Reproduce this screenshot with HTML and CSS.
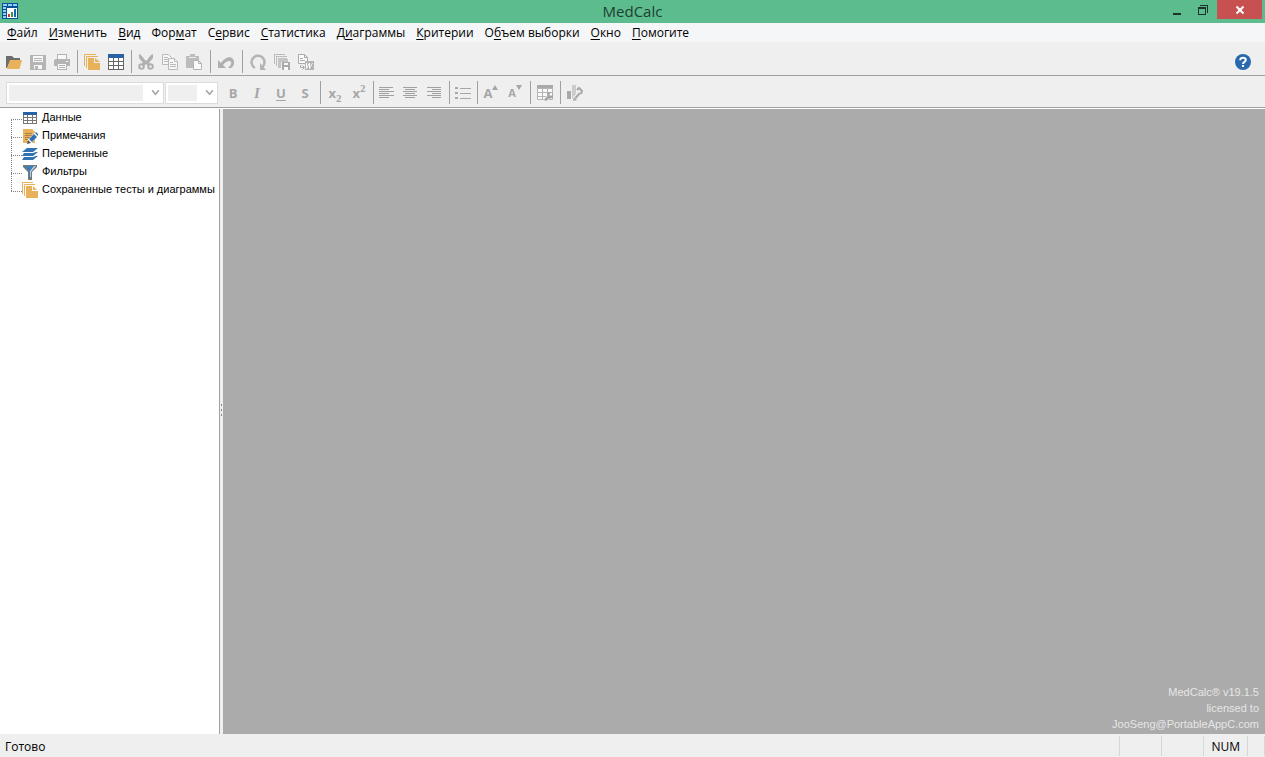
FILE: index.html
```html
<!DOCTYPE html>
<html lang="ru">
<head>
    <meta charset="UTF-8">
    <meta name="viewport" content="width=device-width, initial-scale=1.0">
    <title>MedCalc</title>
    <link rel="stylesheet" href="styles.css">
</head>
<body>
    <!-- Title bar -->
    <header class="titlebar">
        <svg class="app-icon" viewBox="0 0 16 16" shape-rendering="crispEdges">
            <path fill="#0b4f94" d="M0 0h16v16H0z"/>
            <path fill="#8fd0f5" d="M1 1h4v2H1zM6 1h4v2H6zM11 1h4v2h-4zM1 4h3v2H1zM1 7h3v2H1zM1 10h3v2H1zM1 13h3v2H1z"/>
            <path fill="#fff" d="M5 5h10v10H5z"/>
            <path fill="#d33" d="M6 11h2v3H6z"/>
            <path fill="#2a9d4a" d="M9 9h2v5H9z"/>
            <path fill="#1763b0" d="M12 6h2v8h-2z"/>
        </svg>
        <h1 class="title">MedCalc</h1>
        <div class="window-buttons">
            <button class="win-btn" aria-label="Свернуть">
                <svg viewBox="0 0 12 12" shape-rendering="crispEdges"><path fill="#1d3329" d="M1 9h8v2H1z"/></svg>
            </button>
            <button class="win-btn" aria-label="Восстановить">
                <svg viewBox="0 0 12 12" shape-rendering="crispEdges"><path fill="#1d3329" d="M0 3h8v8H0zM1 5v5h6V5zM2 1h8v8H9V2H2z" fill-rule="evenodd"/></svg>
            </button>
            <button class="win-btn win-close" aria-label="Закрыть">
                <svg viewBox="0 0 12 12"><path stroke="#fff" stroke-width="2" d="M2.500 2.500l7 7M9.500 2.500l-7 7"/></svg>
            </button>
        </div>
    </header>

    <!-- Menu -->
    <nav class="menu">
        <a href="#"><u>Ф</u>айл</a>
        <a href="#"><u>И</u>зменить</a>
        <a href="#"><u>В</u>ид</a>
        <a href="#">Фор<u>м</u>ат</a>
        <a href="#">С<u>е</u>рвис</a>
        <a href="#"><u>С</u>татистика</a>
        <a href="#">Д<u>и</u>аграммы</a>
        <a href="#"><u>К</u>ритерии</a>
        <a href="#">О<u>б</u>ъем выборки</a>
        <a href="#"><u>О</u>кно</a>
        <a href="#"><u>П</u>омогите</a>
    </nav>

    <!-- Main toolbar -->
    <div class="toolbar">
        <button class="tool" aria-label="Открыть">
            <svg viewBox="0 0 16 16"><path fill="#6d6d6d" d="M0 2h6l2 2h6v3H4l-3 7H0z"/><path fill="#e8b15c" d="M4 6h12l-2.500 9H1z"/></svg>
        </button>
        <button class="tool" aria-label="Сохранить" disabled>
            <svg viewBox="0 0 16 16" shape-rendering="crispEdges"><path fill="#b4b4b4" fill-rule="evenodd" d="M0 1h15l1 1v14H0zM3 2v6h10V2zM4 11v4h8v-4z"/><path fill="#f8f8f8" d="M3 2h10v6H3zM4 11h8v4H4z"/><path fill="#b4b4b4" d="M4 4h8v1H4zM4 6h8v1H4zM5 12h3v3H5z"/></svg>
        </button>
        <button class="tool" aria-label="Печать" disabled>
            <svg viewBox="0 0 16 16" shape-rendering="crispEdges"><path fill="#b4b4b4" d="M3 0h10v5H3zM1 5h14l1 1v6H0V6zM3 10h10v6H3z"/><path fill="#f8f8f8" d="M4 1h8v4H4zM4 10h8v5H4zM12 7h2v1h-2z"/><path fill="#b4b4b4" d="M5 11h6v1H5zM5 13h6v1H5z"/></svg>
        </button>
        <span class="sep"></span>
        <button class="tool" aria-label="Содержание">
            <svg viewBox="0 0 16 16"><path fill="none" stroke="#e8b15c" d="M.5 12V.5H12M2.500 14V2.500H14"/><path fill="#e8b15c" d="M4 4h6v5h6v7H4zM11 4l5 4h-5z"/></svg>
        </button>
        <button class="tool" aria-label="Данные">
            <svg viewBox="0 0 16 16" shape-rendering="crispEdges"><path fill="#666" d="M0 0h16v16H0z"/><path fill="#2763a6" d="M0 0h16v4H0z"/><path fill="#fff" d="M1 4h4v3H1zM6 4h4v3H6zM11 4h4v3h-4zM1 8h4v3H1zM6 8h4v3H6zM11 8h4v3h-4zM1 12h4v3H1zM6 12h4v3H6zM11 12h4v3h-4z"/></svg>
        </button>
        <span class="sep"></span>
        <button class="tool" aria-label="Вырезать" disabled>
            <svg viewBox="0 0 16 16"><path fill="#b0b0b0" d="M1 0l2 1 4 5 1 1 1-1 4-5 2-1v4l-4 5 2 2-3 1-2-2-2 2-3-1 2-2-4-5z"/><g fill="none" stroke="#b0b0b0" stroke-width="2"><circle cx="3.500" cy="12.500" r="2.300"/><circle cx="12.500" cy="12.500" r="2.300"/></g></svg>
        </button>
        <button class="tool" aria-label="Копировать" disabled>
            <svg viewBox="0 0 16 16"><g fill="#f6f6f6" stroke="#b9b9b9"><path d="M.5.5h6l3 3v7h-9z"/><path d="M6.500 4.500h6l3 3v8h-9z"/><path d="M12.500 4.500v3h3M2 3.500h4M2 5.500h4M2 7.500h4M8 8.500h3M8 10.500h6M8 12.500h6"/></g></svg>
        </button>
        <button class="tool" aria-label="Вставить" disabled>
            <svg viewBox="0 0 16 16"><path fill="#bcbcbc" d="M0 2h4V0h5v2h4v4H7v8H0z"/><path fill="#eee" d="M3 3h7v1H3z"/><path fill="#fafafa" stroke="#b4b4b4" d="M7.500 6.500h5l3 3v6h-8zM12.500 6.500v3h3"/></svg>
        </button>
        <span class="sep sep-wide"></span>
        <button class="tool" aria-label="Отменить" disabled>
            <svg viewBox="0 0 16 16"><path fill="#b0b0b0" d="M0 6v8h8l-3-3c3-4 7-5 8-3 1 2-1 4-3 6h3c3-2 4-6 2-9C12 1 6 4 3 9z"/></svg>
        </button>
        <span class="sep sep-wide"></span>
        <button class="tool" aria-label="Обновить" disabled>
            <svg viewBox="0 0 16 16"><path fill="none" stroke="#b4b4b4" stroke-width="2.500" d="M5 14A6.500 6.500 0 1 1 12.500 13"/><path fill="#b4b4b4" d="M10 9v7h6z"/></svg>
        </button>
        <button class="tool" aria-label="Сохранить все" disabled>
            <svg viewBox="0 0 16 16" shape-rendering="crispEdges"><path fill="none" stroke="#bbb" d="M.5 10V.5H11M2.500 12V2.500H13"/><path fill="#c4c4c4" d="M4 4h9l1 2v2H7v6H4z"/><path fill="#a9a9a9" d="M8 8h8v8H8z"/><path fill="#fafafa" d="M10 9h4v2h-4zM10 13h4v3h-4z"/></svg>
        </button>
        <button class="tool" aria-label="Экспорт в Word" disabled>
            <svg viewBox="0 0 16 16"><path fill="#fafafa" stroke="#aaa" d="M.5.5h6l3 3v6h-9zM6.500.5v3h3M2 4.500h3M2 6.500h5"/><path fill="none" stroke="#aaa" d="M2.500 11v2.500H6M4.500 11.500l2 2-2 2"/><path fill="#b4b4b4" d="M7 7h9v9H7z"/><path fill="none" stroke="#fafafa" d="M8.500 9v5.500l3-5.500v5.500l3-5.500"/></svg>
        </button>
        <button class="tool help" aria-label="Справка">
            <svg viewBox="0 0 16 16"><circle cx="8" cy="8" r="8" fill="#2a69ad"/><path fill="none" stroke="#fff" stroke-width="2" d="M5.200 6.200C5.200 3 11 3 10.800 6 10.700 8 8 7.800 8 10"/><path fill="#fff" d="M7 11h2v2H7z"/></svg>
        </button>
    </div>

    <!-- Format toolbar -->
    <div class="toolbar formatbar">
        <div class="combo combo-font">
            <select aria-label="Шрифт" disabled></select>
            <svg viewBox="0 0 8 8"><path d="M1 2l3 3.500L7 2"/></svg>
        </div>
        <div class="combo combo-size">
            <select aria-label="Размер шрифта" disabled></select>
            <svg viewBox="0 0 8 8"><path d="M1 2l3 3.500L7 2"/></svg>
        </div>
        <button class="tool letter" disabled>B</button>
        <button class="tool letter italic" disabled>I</button>
        <button class="tool letter underline" disabled>U</button>
        <button class="tool letter" disabled>S</button>
        <span class="sep"></span>
        <button class="tool letter" disabled>x<sub>2</sub></button>
        <button class="tool letter" disabled>x<sup>2</sup></button>
        <span class="sep sep-slim"></span>
        <button class="tool" aria-label="По левому краю" disabled>
            <svg viewBox="0 0 16 16" shape-rendering="crispEdges"><path fill="#a0a0a0" d="M0 2h14v1H0zM0 4h10v1H0zM0 6h15v1H0zM0 8h10v1H0zM0 10h15v1H0zM0 12h10v1H0z"/></svg>
        </button>
        <button class="tool" aria-label="По центру" disabled>
            <svg viewBox="0 0 16 16" shape-rendering="crispEdges"><path fill="#a0a0a0" d="M0 2h14v1H0zM2 4h10v1H2zM0 6h14v1H0zM2 8h10v1H2zM0 10h14v1H0zM2 12h10v1H2z"/></svg>
        </button>
        <button class="tool" aria-label="По правому краю" disabled>
            <svg viewBox="0 0 16 16" shape-rendering="crispEdges"><path fill="#a0a0a0" d="M0 2h14v1H0zM5 4h9v1H5zM0 6h14v1H0zM5 8h9v1H5zM0 10h14v1H0zM5 12h9v1H5z"/></svg>
        </button>
        <span class="sep sep-slim"></span>
        <button class="tool" aria-label="Список" disabled>
            <svg viewBox="0 0 16 16" shape-rendering="crispEdges"><path fill="#a8a8a8" d="M0 2h3v2H0zM0 7h3v2H0zM0 12h3v2H0zM5 3h11v1H5zM5 8h11v1H5zM5 13h11v1H5z"/></svg>
        </button>
        <span class="sep sep-slim"></span>
        <button class="tool letter" disabled aria-label="Увеличить шрифт">A<svg class="arrow" viewBox="0 0 6 5"><path fill="#a6a6a6" d="M0 5l3-5 3 5z"/></svg></button>
        <button class="tool letter letter-small" disabled aria-label="Уменьшить шрифт">A<svg class="arrow" viewBox="0 0 6 5"><path fill="#a6a6a6" d="M0 0h6L3 5z"/></svg></button>
        <span class="sep"></span>
        <button class="tool" aria-label="Формат таблицы" disabled>
            <svg viewBox="0 0 16 16"><path fill="#aaa" d="M0 0h16v4H0z"/><path fill="#fafafa" stroke="#b4b4b4" d="M.5 3.500h15v11H.5zM.5 7.500h15M.5 11.500h15M5.500 3.500v11M10.500 3.500v11"/><path fill="none" stroke="#efefef" stroke-width="4" d="M8 16l5-6"/><path fill="none" stroke="#a4a4a4" stroke-width="2.500" d="M8 15.500l5-5"/><path fill="#a4a4a4" d="M10 10l1-3h3l-2 3 2 1 2-2v3l-3 2z"/></svg>
        </button>
        <span class="sep"></span>
        <button class="tool" aria-label="Формат диаграммы" disabled>
            <svg viewBox="0 0 16 16"><path fill="#aaa" d="M0 6h4v8H0z"/><path fill="#ccc" d="M5 0h4v14H5z"/><path fill="none" stroke="#efefef" stroke-width="5" d="M7 15l8-9"/><path fill="none" stroke="#a8a8a8" stroke-width="2" d="M8.500 13l4.500-5M10 5l2-2 3 3-1 3"/><path fill="#a8a8a8" d="M6 16l1-4 3 3z"/></svg>
        </button>
    </div>

    <!-- Work area -->
    <main class="main">
        <aside class="sidebar">
            <ul class="tree">
                <li>
                    <svg viewBox="0 0 16 16" shape-rendering="crispEdges"><path fill="#777" d="M1 2h14v12H1z"/><path fill="#2763a6" d="M1 2h14v3H1z"/><path fill="#fff" d="M2 5h3v2H2zM6 5h4v2H6zM11 5h3v2h-3zM2 8h3v2H2zM6 8h4v2H6zM11 8h3v2h-3zM2 11h3v2H2zM6 11h4v2H6zM11 11h3v2h-3z"/></svg>
                    <a href="#">Данные</a>
                </li>
                <li>
                    <svg viewBox="0 0 16 16"><path fill="#e8b15c" d="M1 1h9l3 3v11H1z"/><path stroke="#a8824a" d="M3 5.500h7M3 7.500h7M3 9.500h5M3 11.500h3"/><path stroke="#fff" stroke-width="5" d="M7 14l8-8"/><path fill="#2f6fb0" d="M7 11l5-5 3 3-5 5zM13 5l1-1 2 2v2z"/><path fill="#555" d="M5 16l1-4 3 3z"/></svg>
                    <a href="#">Примечания</a>
                </li>
                <li>
                    <svg viewBox="0 0 16 16"><path fill="#3173b3" d="M5 2h11l-5 4H0zM2 7h9l3-1h2l-5 4H0zM2 11h9l3-1h2l-5 4H0z"/></svg>
                    <a href="#">Переменные</a>
                </li>
                <li>
                    <svg viewBox="0 0 16 16"><path fill="#777" d="M1 1h14v2l-5 5v8H6V8L1 3z"/><path fill="#3b7dbd" d="M2 2h10L8 7v8H7V7z"/><path fill="#b9cde0" d="M12 2h2L9 8v5H8V7z"/></svg>
                    <a href="#">Фильтры</a>
                </li>
                <li>
                    <svg viewBox="0 0 16 16"><path fill="none" stroke="#e8b15c" d="M.5 12V.5H11M2.500 14V2.500H13"/><path fill="#e8b15c" d="M4 4h6v5h6v7H4zM11 4l4 4h-4z"/></svg>
                    <a href="#">Сохраненные тесты и диаграммы</a>
                </li>
            </ul>
        </aside>
        <div class="splitter"><i></i><i></i><i></i></div>
        <section class="workspace">
            <p class="license">MedCalc® v19.1.5<br>licensed to<br>JooSeng@PortableAppC.com</p>
        </section>
    </main>

    <!-- Status bar -->
    <footer class="statusbar">
        <span class="status-text">Готово</span>
        <span class="status-cell"></span>
        <span class="status-cell"></span>
        <span class="status-cell">NUM</span>
        <span class="status-cell status-grip"></span>
    </footer>
</body>
</html>
```
FILE: styles.css
```css
/* General styling */
* {
    margin: 0;
    padding: 0;
    box-sizing: border-box;
}
body {
    display: flex;
    flex-direction: column;
    height: 100vh;
    overflow: hidden;
    font-family: 'Open Sans', 'Noto Sans', sans-serif;
    font-size: 12px;
    color: #000;
    background-color: #efefef;
}
button {
    border: none;
    background: none;
    font-family: inherit;
}
a {
    color: inherit;
    text-decoration: none;
}
svg {
    display: block;
    flex: none;
}

/* Title bar */
.titlebar {
    display: grid;
    grid-template-columns: 1fr auto 1fr;
    height: 23px;
    flex: none;
    background-color: #5cbc8e;
}
.app-icon {
    width: 16px;
    height: 16px;
    margin: 3px 0 0 2px;
}
.title {
    font-size: 15px;
    font-weight: 400;
    line-height: 23px;
    color: #1d4030;
}
.window-buttons {
    display: flex;
    justify-content: flex-end;
    padding-right: 3px;
}
.win-btn {
    display: flex;
    align-items: center;
    justify-content: center;
    width: 26px;
    height: 19px;
}
.win-btn svg {
    width: 12px;
    height: 12px;
}
.win-close {
    width: 45px;
    background-color: #c75050;
}

/* Menu */
.menu {
    display: flex;
    flex: none;
    gap: 11px;
    height: 19px;
    padding-left: 7px;
    line-height: 20px;
    white-space: nowrap;
    background-color: #f5f6f7;
}
.menu u {
    text-underline-offset: 2px;
}

/* Toolbars */
.toolbar {
    display: flex;
    flex: none;
    align-items: center;
    height: 34px;
    padding: 6px 10px 0 2px;
    border-bottom: 1px solid #a0a0a0;
}
.tool {
    display: flex;
    align-items: center;
    justify-content: center;
    width: 24px;
    height: 24px;
    flex: none;
}
.tool svg {
    width: 16px;
    height: 16px;
}
.help {
    margin-left: auto;
}
.sep {
    width: 6px;
    height: 23px;
    flex: none;
    background: linear-gradient(#a0a0a0, #a0a0a0) center / 1px 100% no-repeat;
}
.sep-wide {
    width: 8px;
}
.sep-slim {
    width: 4px;
}

/* Format toolbar */
.formatbar {
    height: 32px;
    padding: 2px 0 0 6px;
}
.combo {
    position: relative;
    height: 22px;
    margin-right: 1px;
}
.combo select {
    display: block;
    width: 100%;
    height: 100%;
    padding: 2px 20px 2px 2px;
    appearance: none;
    border: 1px solid #dcdcdc;
    border-radius: 0;
    background: #efefef content-box;
    box-shadow: inset 0 0 0 2px #fff, inset -20px 0 0 #fff;
    opacity: 1;
}
.combo svg {
    position: absolute;
    right: 4px;
    top: 6px;
    width: 9px;
    height: 9px;
    fill: none;
    stroke: #a6a6a6;
    stroke-width: 1.5;
}
.combo-font {
    width: 158px;
}
.combo-size {
    width: 53px;
    margin-right: 3px;
}
.letter {
    font-size: 13px;
    font-weight: 700;
    line-height: 24px;
    color: #a6a6a6;
}
.letter sub,
.letter sup {
    font-family: 'Liberation Serif', serif;
    font-size: 11px;
    line-height: 14px;
}
.letter sub {
    align-self: flex-end;
}
.letter sup {
    align-self: flex-start;
}
.letter-small {
    font-size: 11px;
}
.italic {
    font-family: 'Liberation Serif', serif;
    font-size: 15px;
    font-style: italic;
}
.underline {
    text-decoration: underline;
    text-underline-offset: 2px;
}
.letter .arrow {
    align-self: flex-start;
    width: 6px;
    height: 5px;
    margin-top: 4px;
}

/* Work area */
.main {
    display: flex;
    flex: 1;
    min-height: 0;
    border-top: 1px solid #fff;
}
.sidebar {
    width: 220px;
    flex: none;
    border-right: 1px solid #a0a0a0;
    background-color: #fff;
}
.tree {
    position: relative;
    margin-left: 11px;
    list-style: none;
    font-family: 'Liberation Sans', sans-serif;
    font-size: 11px;
    line-height: 16px;
    white-space: nowrap;
}
.tree::before {
    content: '';
    position: absolute;
    top: 10px;
    bottom: 8px;
    left: 0;
    border-left: 1px dotted #808080;
}
.tree li {
    display: flex;
    align-items: flex-start;
    height: 18px;
}
.tree li::before {
    content: '';
    width: 11px;
    margin-top: 10px;
    border-top: 1px dotted #808080;
}
.tree svg {
    width: 16px;
    height: 16px;
    margin: 1px 4px 0 0;
}
.splitter {
    display: flex;
    flex-direction: column;
    align-items: center;
    justify-content: center;
    gap: 3px;
    width: 3px;
    padding-bottom: 24px;
    flex: none;
}
.splitter i {
    width: 1px;
    height: 2px;
    background-color: #888;
}
.workspace {
    display: flex;
    flex: 1;
    align-items: flex-end;
    justify-content: flex-end;
    background-color: #ababab;
}
.license {
    padding: 0 6px 2px 0;
    font-family: 'Liberation Sans', sans-serif;
    font-size: 11px;
    line-height: 16px;
    text-align: right;
    color: #e6e6e6;
}

/* Status bar */
.statusbar {
    display: flex;
    flex: none;
    height: 23px;
    padding: 2px 0 1px;
    line-height: 22px;
}
.status-text {
    flex: 1;
    padding-left: 5px;
}
.status-cell {
    min-width: 42px;
    padding: 0 7px;
    border-left: 1px solid #d7d7d7;
}
.status-grip {
    min-width: 18px;
    border-right: 1px solid #d7d7d7;
}
```
